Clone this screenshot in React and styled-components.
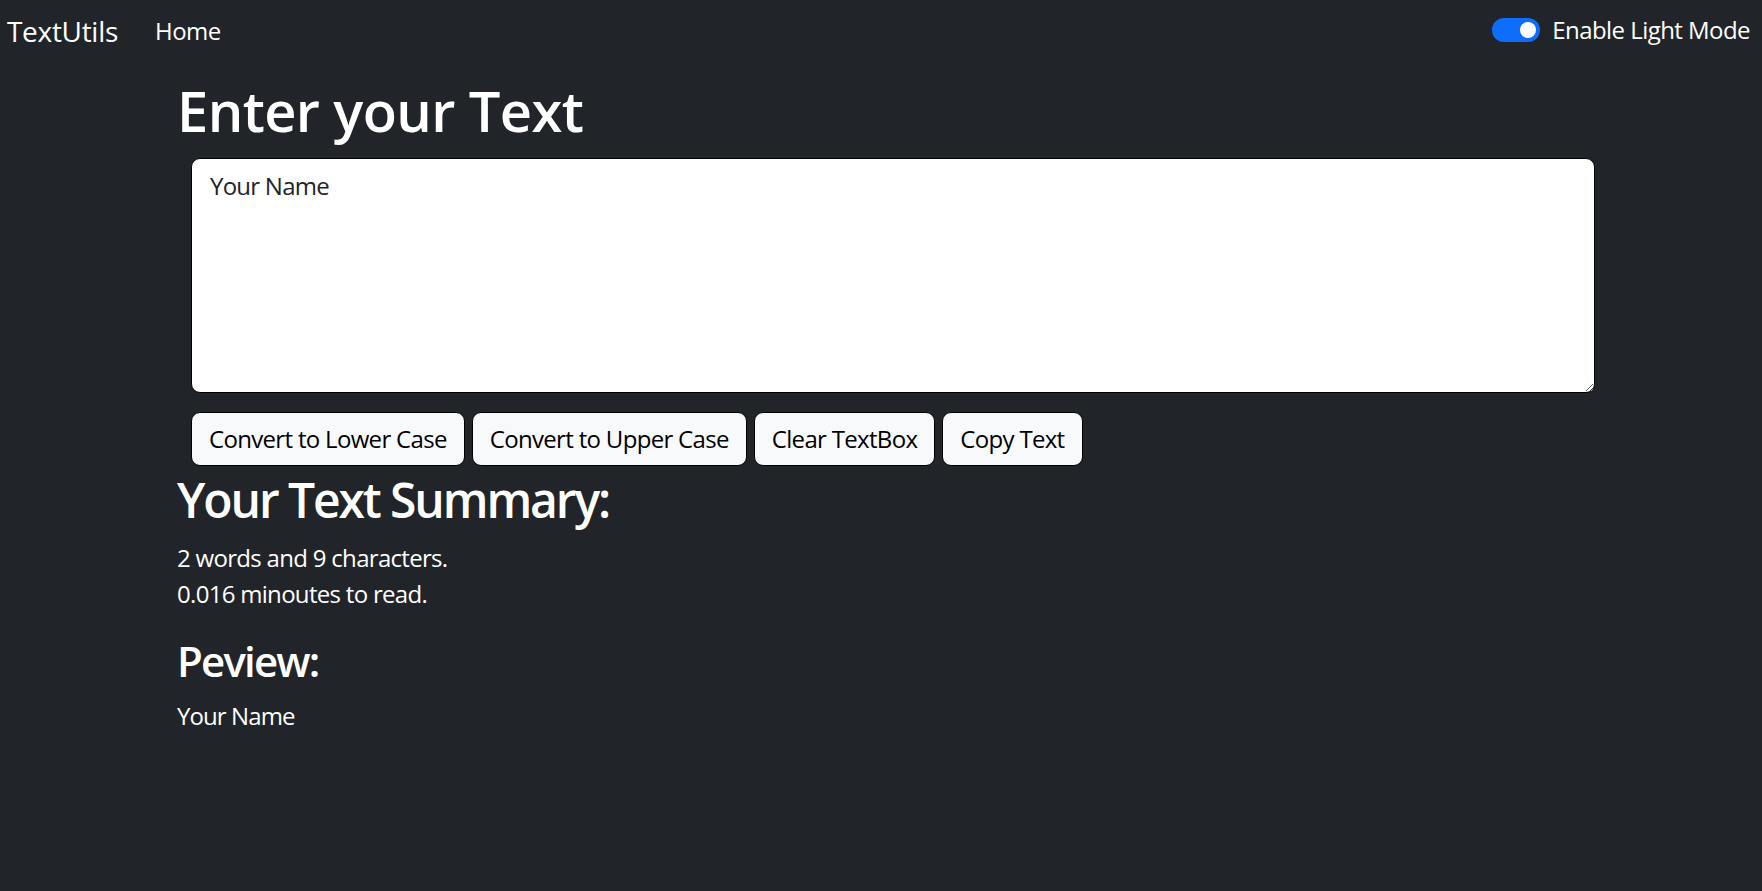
import React, { useState } from "react";
import styled, { createGlobalStyle } from "styled-components";

const GlobalStyle = createGlobalStyle`
  html, body {
    margin: 0;
    padding: 0;
    background: #212529;
  }
  body {
    font-family: "Open Sans", "Noto Sans", sans-serif;
    color: #ffffff;
    min-height: 891px;
  }
  * {
    box-sizing: border-box;
  }
`;

const App = () => {
  const [text, setText] = useState("Your Name");
  const [light, setLight] = useState(false);

  const words = text.split(/\s+/).filter((w) => w.length !== 0).length;

  return (
    <>
      <GlobalStyle />
      <Navbar>
        <Brand href="#">TextUtils</Brand>
        <NavLink href="#">Home</NavLink>
        <SwitchGroup>
          <Switch
            type="button"
            $on={!light}
            aria-label="Enable Light Mode"
            onClick={() => setLight(!light)}
          />
          <SwitchLabel>Enable Light Mode</SwitchLabel>
        </SwitchGroup>
      </Navbar>

      <Container>
        <Heading>Enter your Text</Heading>
        <TextBox
          value={text}
          rows={6}
          onChange={(e) => setText(e.target.value)}
        />
        <ButtonRow>
          <ActionButton onClick={() => setText(text.toLowerCase())}>
            Convert to Lower Case
          </ActionButton>
          <ActionButton onClick={() => setText(text.toUpperCase())}>
            Convert to Upper Case
          </ActionButton>
          <ActionButton onClick={() => setText("")}>Clear TextBox</ActionButton>
          <ActionButton onClick={() => navigator.clipboard?.writeText(text)}>
            Copy Text
          </ActionButton>
        </ButtonRow>

        <SubHeading>Your Text Summary:</SubHeading>
        <Summary>
          {words} words and {text.length} characters.
          <br />
          {(0.008 * words).toFixed(3)} minoutes to read.
        </Summary>

        <SmallHeading>Peview:</SmallHeading>
        <Preview>{text}</Preview>
      </Container>
    </>
  );
};

const Navbar = styled.nav`
  display: flex;
  align-items: center;
  height: 60px;
  padding: 2px 12px 0 7px;
`;

const Brand = styled.a`
  font-size: 28px;
  line-height: 40px;
  color: #ffffff;
  text-decoration: none;
  letter-spacing: -0.3px;
`;

const NavLink = styled.a`
  margin-left: 37px;
  font-size: 24px;
  line-height: 36px;
  color: #ffffff;
  text-decoration: none;
  letter-spacing: -0.5px;
`;

const SwitchGroup = styled.div`
  display: flex;
  align-items: center;
  margin-left: auto;
  padding-bottom: 3px;
`;

const Switch = styled.button`
  position: relative;
  width: 48px;
  height: 24px;
  padding: 0;
  border: none;
  border-radius: 12px;
  background: ${(p) => (p.$on ? "#0d6efd" : "#495057")};
  cursor: pointer;

  &::after {
    content: "";
    position: absolute;
    top: 4px;
    left: ${(p) => (p.$on ? "28px" : "4px")};
    width: 16px;
    height: 16px;
    border-radius: 50%;
    background: #ffffff;
  }
`;

const SwitchLabel = styled.label`
  margin-left: 12px;
  font-size: 24px;
  line-height: 36px;
  color: #ffffff;
  letter-spacing: -0.55px;
`;

const Container = styled.main`
  width: 1440px;
  margin: 0 auto;
  padding: 17px 20px 0 16px;
`;

const Heading = styled.h1`
  margin: 0 0 14px;
  font-size: 56px;
  line-height: 1.2;
  font-weight: 600;
  letter-spacing: -0.6px;
`;

const TextBox = styled.textarea`
  display: block;
  width: 100%;
  height: 235px;
  margin-left: 14px;
  padding: 9px 18px;
  font-family: inherit;
  font-size: 24px;
  line-height: 36px;
  letter-spacing: -0.75px;
  color: #212529;
  background: #ffffff;
  border: 1px solid #000000;
  border-radius: 9px;
  resize: vertical;
`;

const ButtonRow = styled.div`
  display: flex;
  gap: 7px;
  margin: 19px 0 0 14px;
`;

const ActionButton = styled.button`
  height: 54px;
  padding: 8px 17px;
  font-family: inherit;
  font-size: 24px;
  line-height: 36px;
  letter-spacing: -0.68px;
  color: #000000;
  background: #f8f9fa;
  border: 1px solid #000000;
  border-radius: 9px;
  cursor: pointer;
`;

const SubHeading = styled.h2`
  margin: 5px 0 11px;
  font-size: 48px;
  line-height: 1.2;
  font-weight: 600;
  letter-spacing: -2.1px;
`;

const Summary = styled.p`
  margin: 0 0 24px;
  font-size: 24px;
  line-height: 36px;
  letter-spacing: -0.7px;
`;

const SmallHeading = styled.h3`
  margin: 0 0 11.5px;
  font-size: 42px;
  line-height: 1.2;
  font-weight: 600;
  letter-spacing: -1.8px;
`;

const Preview = styled.p`
  margin: 0;
  font-size: 24px;
  line-height: 36px;
  letter-spacing: -0.9px;
`;

export default App;
